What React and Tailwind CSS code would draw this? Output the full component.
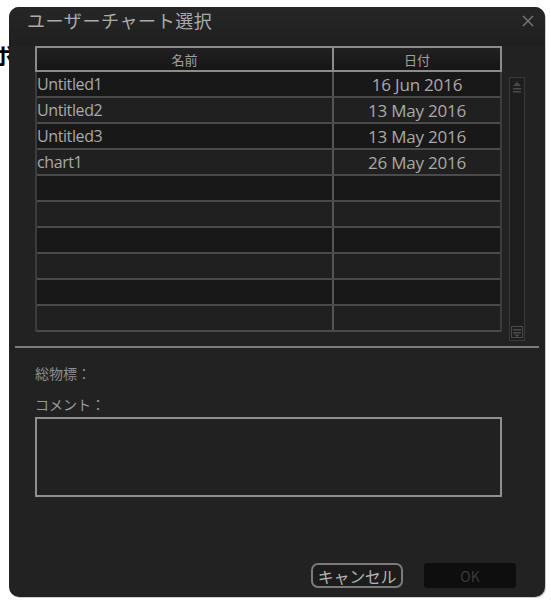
import React from "react";

const rows = [
  ["Untitled1", "16 Jun 2016"],
  ["Untitled2", "13 May 2016"],
  ["Untitled3", "13 May 2016"],
  ["chart1", "26 May 2016"],
  ["", ""],
  ["", ""],
  ["", ""],
  ["", ""],
  ["", ""],
  ["", ""],
];

export default function App() {
  return (
    <div
      className="relative w-[551px] h-[603px] bg-white overflow-hidden"
      style={{ fontFamily: '"Open Sans", "Noto Sans CJK JP", sans-serif' }}
    >
      <span
        className="absolute left-[-8px] top-[38px] text-[22px] font-bold text-black"
        style={{ fontFamily: '"Noto Sans CJK JP", sans-serif' }}
      >
        ボ
      </span>
      <div className="relative ml-[9px] mt-[7px] w-[536px] h-[590px] rounded-[10px] bg-[#222222] shadow-[1px_1px_0_#cfcfcf] flex flex-col">
        {/* Title bar */}
        <div className="h-[39px] flex items-start justify-between pt-[2px] pl-[18px] pr-[11px] rounded-t-[10px] bg-gradient-to-b from-[#262626] to-[#1f1f1f]">
          <span
            className="text-[18px] leading-[22px] text-[#ababab] tracking-[0.6px]"
            style={{ fontFamily: '"Noto Sans CJK JP", sans-serif' }}
          >
            ユーザーチャート選択
          </span>
          <svg width="12" height="12" viewBox="0 0 12 12" className="mt-[6px]">
            <path d="M1 1 L11 11 M11 1 L1 11" stroke="#7a7a7a" strokeWidth="1.4" />
          </svg>
        </div>

        {/* Table + scrollbar */}
        <div className="flex pl-[26px] pr-[19px] gap-[7px]">
          <div className="w-[467px] flex flex-col">
            <div
              className="flex h-[26px] border-2 border-[#8c8c8c] bg-gradient-to-b from-[#202020] to-[#161616] text-[#a0a0a0] text-[13px] leading-none"
              style={{ fontFamily: '"Noto Sans CJK JP", sans-serif' }}
            >
              <div className="w-[297px] flex items-center justify-center border-r-2 border-[#8c8c8c]">名前</div>
              <div className="flex-1 flex items-center justify-center">日付</div>
            </div>
            <div className="flex flex-col border-l-2 border-r-2 border-[#3c3c3c]">
              {rows.map((r, i) => (
                <div
                  key={i}
                  className={`flex h-[26px] border-b-2 border-[#4a4a4a] ${i % 2 === 0 ? "bg-[#181818]" : "bg-[#202020]"}`}
                >
                  <div className="w-[297px] flex items-center text-[16px] tracking-[-0.4px] text-[#a9a9a9] border-r-2 border-[#555555] leading-none">
                    {r[0]}
                  </div>
                  <div className="flex-1 flex items-center justify-center text-[17px] tracking-[-0.2px] text-[#a9a9a9] leading-none">
                    {r[1]}
                  </div>
                </div>
              ))}
            </div>
          </div>
          {/* scrollbar */}
          <div className="mt-[31px] w-[16px] h-[264px] border border-[#3a3a3a] flex flex-col justify-between items-center bg-[#1e1e1e]">
            <svg width="10" height="12" viewBox="0 0 10 12" className="mt-[3px]">
              <path d="M5 1 L9 5 H1 Z" fill="#4a4a4a" />
              <rect x="1" y="7" width="8" height="1.5" fill="#4a4a4a" />
              <rect x="1" y="10" width="8" height="1.5" fill="#4a4a4a" />
            </svg>
            <svg width="12" height="12" viewBox="0 0 12 12" className="mb-[2px]">
              <rect x="0.5" y="0.5" width="11" height="11" fill="none" stroke="#4a4a4a" />
              <rect x="2" y="3" width="8" height="1.5" fill="#4a4a4a" />
              <rect x="2" y="6" width="8" height="1.5" fill="#4a4a4a" />
              <path d="M3 8.5 H9 L6 11 Z" fill="#4a4a4a" />
            </svg>
          </div>
        </div>

        {/* separator */}
        <div className="mx-[6px] mt-[5px] h-[2px] bg-[#7c7c7c]" />

        {/* info */}
        <div
          className="pl-[26px] pr-[42px] flex flex-col"
          style={{ fontFamily: '"Noto Sans CJK JP", sans-serif' }}
        >
          <div className="mt-[15px] text-[14px] text-[#8e8e8e] leading-[20px]">総物標：</div>
          <div className="mt-[11px] text-[14px] text-[#9a9a9a] leading-[20px]">コメント：</div>
          <div className="mt-[3px] h-[80px] w-[467px] border-2 border-[#8f8f8f] bg-[#212121]" />
        </div>

        {/* buttons */}
        <div
          className="mt-auto mb-[9px] flex justify-end gap-[21px] pr-[29px]"
          style={{ fontFamily: '"Noto Sans CJK JP", sans-serif' }}
        >
          <button className="w-[92px] h-[25px] rounded-[7px] border-2 border-[#7a7a7a] bg-[#1c1c1c] text-[16px] tracking-[-0.3px] text-[#b4b4b4] leading-none flex items-center justify-center">
            キャンセル
          </button>
          <button className="w-[92px] h-[25px] rounded-[3px] bg-[#0e0e0e] text-[14px] text-[#3a3a3a] leading-none flex items-center justify-center">
            OK
          </button>
        </div>
      </div>
    </div>
  );
}
